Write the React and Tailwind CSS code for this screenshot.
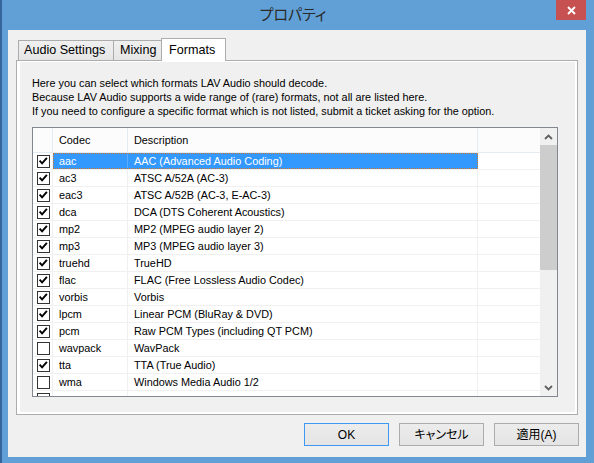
import React from "react";

const rows = [
  ["aac", "AAC (Advanced Audio Coding)", true],
  ["ac3", "ATSC A/52A (AC-3)", true],
  ["eac3", "ATSC A/52B (AC-3, E-AC-3)", true],
  ["dca", "DCA (DTS Coherent Acoustics)", true],
  ["mp2", "MP2 (MPEG audio layer 2)", true],
  ["mp3", "MP3 (MPEG audio layer 3)", true],
  ["truehd", "TrueHD", true],
  ["flac", "FLAC (Free Lossless Audio Codec)", true],
  ["vorbis", "Vorbis", true],
  ["lpcm", "Linear PCM (BluRay & DVD)", true],
  ["pcm", "Raw PCM Types (including QT PCM)", true],
  ["wavpack", "WavPack", false],
  ["tta", "TTA (True Audio)", true],
  ["wma", "Windows Media Audio 1/2", false],
  ["", "", false],
];

function Check({ checked }) {
  return (
    <div className="w-[13px] h-[13px] border border-[#333333] bg-white flex items-center justify-center shrink-0">
      {checked && (
        <svg width="11" height="11" viewBox="0 0 11 11">
          <path d="M1.6 4.6 L4.1 7.4 L8.9 1.8" fill="none" stroke="#000" strokeWidth="1.9" />
        </svg>
      )}
    </div>
  );
}

function Row({ codec, desc, checked, selected }) {
  return (
    <div className="flex h-[17px] shrink-0 border-b border-[#f0f0f0]">
      <div className="w-[20px] shrink-0 border-r border-[#f0f0f0] flex items-center pl-[4px]">
        <Check checked={checked} />
      </div>
      {selected ? (
        <div className="flex w-[425px] shrink-0 bg-[#3399ff] text-white outline outline-1 outline-dotted outline-[#cc7733] -outline-offset-1">
          <div className="w-[75px] shrink-0 border-r border-[#5aadff] pl-[6px] flex items-center">{codec}</div>
          <div className="w-[350px] shrink-0 pl-[6px] flex items-center">{desc}</div>
        </div>
      ) : (
        <>
          <div className="w-[75px] shrink-0 border-r border-[#f0f0f0] pl-[6px] flex items-center">{codec}</div>
          <div className="w-[350px] shrink-0 border-r border-[#f0f0f0] pl-[6px] flex items-center">{desc}</div>
        </>
      )}
      <div className="flex-1" />
    </div>
  );
}

function Chevron({ up }) {
  return (
    <svg width="9" height="6" viewBox="0 0 9 6">
      <path
        d={up ? "M1 5 L4.5 1.5 L8 5" : "M1 1 L4.5 4.5 L8 1"}
        fill="none"
        stroke="#606060"
        strokeWidth="1.8"
      />
    </svg>
  );
}

export default function App() {
  const ui = "font-['Liberation_Sans','Noto_Sans_CJK_JP',sans-serif]";
  return (
    <div
      className={`w-[594px] h-[463px] flex flex-col overflow-hidden bg-[linear-gradient(to_right,#35659a_0px,#35659a_2px,#61a0d6_2px)] ${ui}`}
    >
      {/* Title bar */}
      <div className="h-[30px] shrink-0 flex">
        <div className="flex-1" />
        <div className="flex items-center pb-[1px] font-['Noto_Sans_CJK_JP',sans-serif] text-[15px] text-[#2a2a2a] [font-feature-settings:'palt']">
          プロパティ
        </div>
        <div className="flex-1 flex justify-end pr-[8px]">
          <div className="w-[30px] h-[20px] bg-[#c75050] flex items-center justify-center">
            <svg width="9" height="9" viewBox="0 0 9 9">
              <path d="M1 1 L8 8 M8 1 L1 8" stroke="#fff" strokeWidth="1.9" />
            </svg>
          </div>
        </div>
      </div>

      {/* Client area */}
      <div className="flex-1 flex flex-col ml-[8px] mr-[8px] mb-[6px] bg-[#f0f0f0] pt-[8px] pl-[8px]">
        {/* Tabs */}
        <div className="h-[22px] shrink-0 flex items-start pl-[2px] relative z-10 text-[12.6px] text-black">
          <div className="mt-[2px] h-[20px] w-[96px] border-l border-t border-r border-[#acacac] bg-[linear-gradient(#f0f0f0,#e5e5e5)] flex items-center pl-[5px]">
            Audio Settings
          </div>
          <div className="mt-[2px] h-[20px] w-[48px] border-t border-r border-[#acacac] bg-[linear-gradient(#f0f0f0,#e5e5e5)] flex items-center pl-[6px]">
            Mixing
          </div>
          <div className="-ml-px h-[23px] w-[65px] border-l border-t border-r border-[#acacac] bg-white flex items-start pt-[2px] pl-[7px]">
            Formats
          </div>
        </div>

        {/* Tab panel */}
        <div className="w-[562px] h-[355px] shrink-0 border border-[#adadad] bg-white pl-[3px] pr-[2px] pb-[2px] pt-[1px] flex">
          <div className="flex-1 bg-[#f0f0f0] flex flex-col pl-[12px] pt-[14px] text-[10.85px] text-black">
            <div className="leading-[14px]">
              <div>Here you can select which formats LAV Audio should decode.</div>
              <div>Because LAV Audio supports a wide range of (rare) formats, not all are listed here.</div>
              <div>If you need to configure a specific format which is not listed, submit a ticket asking for the option.</div>
            </div>

            {/* List view */}
            <div className="mt-[9px] w-[526px] h-[270px] shrink-0 border border-[#828790] bg-white flex overflow-hidden">
              <div className="flex-1 flex flex-col overflow-hidden">
                <div className="h-[25px] shrink-0 flex border-b border-[#e5ebf3] bg-[#fcfcfc]">
                  <div className="w-[20px] shrink-0 border-r border-[#e5ebf3]" />
                  <div className="w-[75px] shrink-0 border-r border-[#e5ebf3] pl-[6px] flex items-center">Codec</div>
                  <div className="w-[350px] shrink-0 border-r border-[#e5ebf3] pl-[6px] flex items-center">Description</div>
                  <div className="flex-1" />
                </div>
                {rows.map(([c, d, ch], i) => (
                  <Row key={i} codec={c} desc={d} checked={ch} selected={i === 0} />
                ))}
              </div>
              {/* Scrollbar */}
              <div className="w-[17px] shrink-0 bg-[#f0f0f0] flex flex-col">
                <div className="h-[17px] shrink-0 flex items-center justify-center">
                  <Chevron up />
                </div>
                <div className="h-[125px] shrink-0 bg-[#cdcdcd]" />
                <div className="flex-1" />
                <div className="h-[17px] shrink-0 flex items-center justify-center">
                  <Chevron />
                </div>
              </div>
            </div>
          </div>
        </div>

        {/* Buttons */}
        <div className="mt-[8px] flex justify-end gap-[10px] pr-[7px] text-[12px] text-black">
          <div className="w-[85px] h-[23px] border border-[#3c98f0] bg-[linear-gradient(#ececec,#e4e4e4)] flex items-center justify-center">
            OK
          </div>
          <div className="w-[85px] h-[23px] border border-[#acacac] bg-[linear-gradient(#ececec,#e4e4e4)] flex items-center justify-center [font-feature-settings:'palt']">
            キャンセル
          </div>
          <div className="w-[85px] h-[23px] border border-[#acacac] bg-[linear-gradient(#ececec,#e4e4e4)] flex items-center justify-center [font-feature-settings:'palt']">
            適用(A)
          </div>
        </div>
      </div>
    </div>
  );
}
